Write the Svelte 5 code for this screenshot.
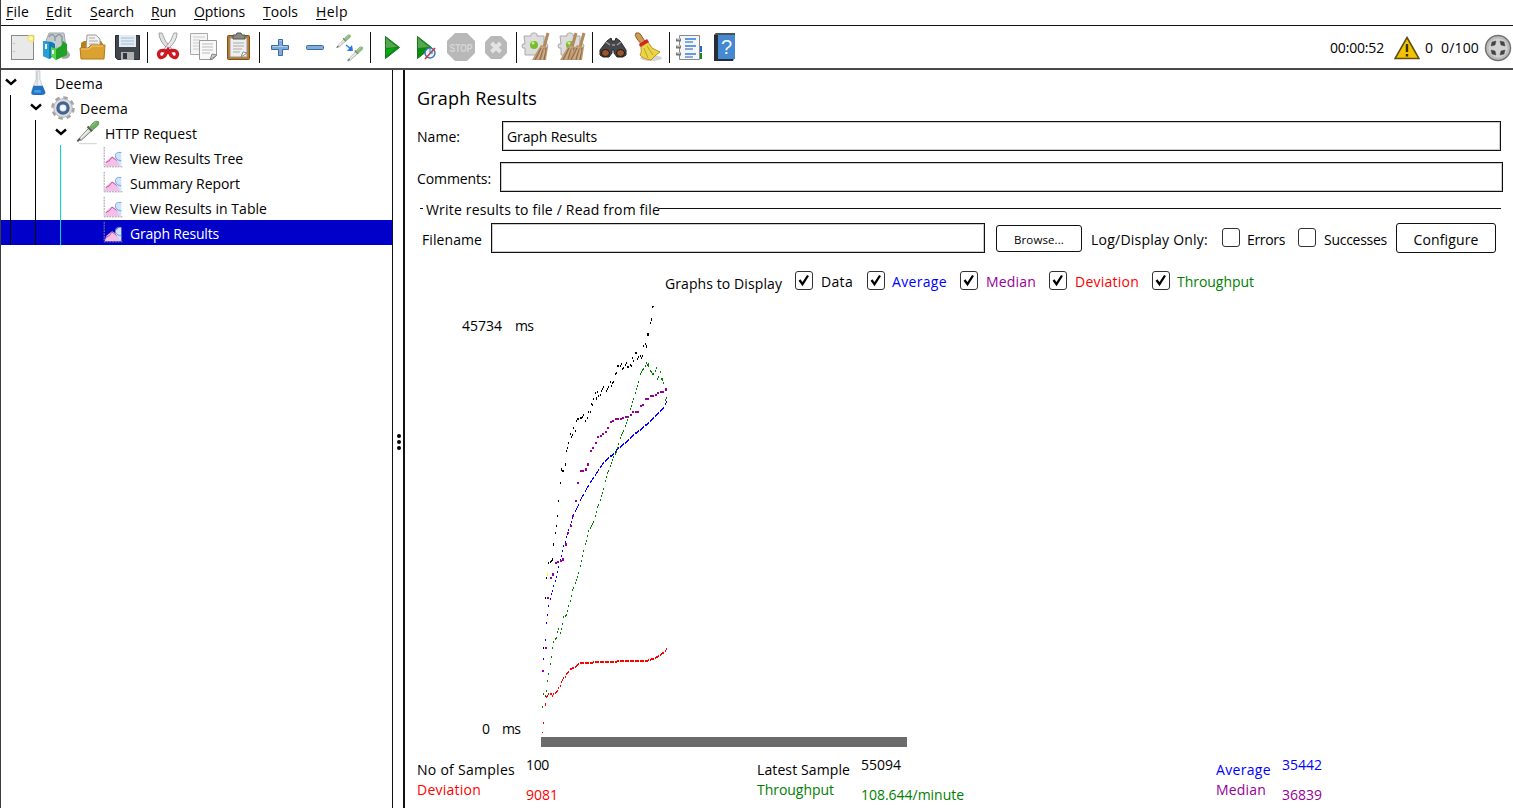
<script>
  // Tightens or loosens tracking so a label fills its designed width.
  function fit(node, width) {
    const natural = node.getBoundingClientRect().width;
    node.style.letterSpacing = (width - natural) / node.textContent.length + 'px';
  }

  const menus = [['File', 23], ['Edit', 26], ['Search', 44], ['Run', 25], ['Options', 51], ['Tools', 35], ['Help', 32]];
  const tools = ['new', 'templates', 'open', 'save', '|', 'cut', 'copy', 'paste', '|', 'plus', 'minus', 'toggle', '|', 'play', 'playnow', 'stop', 'shutdown', '|', 'clear', 'clearall', '|', 'search', 'sweep', '|', 'list', 'help'];
  const tree = [
    { d: 0, icon: 'flask', text: 'Deema', w: 48, open: true },
    { d: 1, icon: 'gear', text: 'Deema', w: 48, open: true },
    { d: 2, icon: 'pipette', text: 'HTTP Request', w: 92, open: true },
    { d: 3, icon: 'chart', text: 'View Results Tree', w: 113 },
    { d: 3, icon: 'chart', text: 'Summary Report', w: 110 },
    { d: 3, icon: 'chart', text: 'View Results in Table', w: 137 },
    { d: 3, icon: 'chart', text: 'Graph Results', w: 89, selected: true }
  ];
  const graphs = [['Data', 32, 'black'], ['Average', 55, 'blue'], ['Median', 50, 'purple'], ['Deviation', 64, 'red'], ['Throughput', 77, 'green']];
  const stats = [
    [['No of Samples', 98, '100', 23, 'black'], ['Latest Sample', 93, '55094', 40, 'black'], ['Average', 55, '35442', 40, 'blue']],
    [['Deviation', 64, '9081', 32, 'red'], ['Throughput', 77, '108.644/minute', 103, 'green'], ['Median', 50, '36839', 40, 'purple']]
  ];

  // Each mark is [x, y, width, height]; width and height are optional.
  const draw = (marks, dw = 1, dh = 2) => marks.map(([x, y, w = dw, h = dh]) => `M${x} ${y}h${w}v${h}h${-w}z`).join('');

  // Samples advance 1.25px, so every fifth column stays empty.
  function trace(points) {
    const out = [];
    for (let i = 0; i < points.length - 1; i++) {
      const [x0, y0] = points[i];
      const [x1, y1] = points[i + 1];
      for (let x = x0; x < x1; x++) {
        if (x % 5 === 4) continue;
        out.push([x, Math.round(y0 + ((y1 - y0) * (x - x0)) / (x1 - x0))]);
      }
    }
    out.push(points[points.length - 1]);
    return out;
  }

  const data = draw([
    [122,6,2,1],[122,6],[121,18,1,3],[120,22],[117,33,2,3],[115,43],[116,45,1,3],[113,45],[105,52,2,2],[102,57],[103,60],[107,58],[108,56],[110,55],[111,57],[112,55],
    [87,65,2,2],[90,65],[91,63],[92,68],[93,67],[95,64],[96,62],[97,66,2,2],[100,64],[101,65],[85,73],[86,72],[83,81],[82,82],[80,81],[81,85],[78,86],[77,88],[76,90],[73,86],[72,88],[71,90],[70,94],
    [67,91],[65,92],[68,95],[66,97,1,3],[63,98],[62,104],[61,103],[60,111],[58,111],[57,117],[55,120],[53,114],[52,116],[50,117,2,2],[47,118,2,2],[46,120],[45,130],[43,127],[42,134],[41,136],[40,133],
    [38,142],[37,147],[36,150],[35,163,1,3],[31,168,1,3],[32,170,2,2],[30,182],[28,200],[27,215],[26,225],[25,232],[23,243,1,3],[22,258,1,3],[21,260],[20,261],[18,262],[16,277],[15,297],[13,347]
  ]);
  const median = draw([
    [135,88,2,3],[132,91],[130,91],[127,92],[125,94],[122,95],[120,95,3],[115,98,4],[112,104],[110,105],[105,111,4],[102,111],[100,114],[95,116,3],[92,117],[90,118],[85,118,4],[82,120],[80,121],[77,127],[75,131],[72,133],[70,135],[67,136],[65,142],[62,147],
    [60,150],[57,163,2,3],[55,168,2,3],[50,170,4],[47,182],[45,200],[42,215],[40,225],[37,232],[35,243,2,3],[32,258,2,3],[30,260],[27,261],[25,262],[22,273,2,3],[20,277],[17,297],[15,347],[12,370]
  ], 2, 2);
  const average = draw(trace([
    [13,358],[15,339],[16,322],[17,314],[18,305],[20,298],[21,293],[22,290],[23,285],[25,280],[26,276],[27,271],[28,266],[31,255],[33,245],[35,241],[36,236],[38,229],[40,224],[43,214],[46,208],[50,199],[55,190],[60,181],[66,172],[73,162],[78,157],[84,152],[87,148],[92,144],[97,140],[103,134],[112,127],[120,120],[126,114],[130,110],[133,107],[136,101]
  ]), 1, 2);
  const deviation = draw([
    [12,432,1,1],[13,422],[15,403,1,3],[16,396],
    ...trace([[17,395],[18,393],[21,393],[22,395],[23,393],[25,392],[27,390],[28,387],[30,385],[31,381],[33,377],[35,376],[36,373],[38,371],[40,368],[42,367],[45,366],[46,365],[48,363],[51,362],[62,362],[63,361],[85,361],[87,360],[117,360],[118,359],[122,358],[125,357],[128,355],[131,353],[134,351],[136,348]])
  ]);
  const throughput = draw([
    ...trace([[12,406],[13,393],[15,395],[16,390],[17,380],[18,373],[20,363],[21,356],[22,347],[23,341],[25,338],[26,337],[27,331],[28,328],[30,332],[31,328],[32,323],[33,316],[35,315],[36,314],[37,310],[38,305],[40,300],[41,295],[42,289],[46,279],[50,265],[53,250],[56,240],[58,230],[61,225],[63,221],[65,215],[67,206],[70,199],[73,188],[77,172],[80,165],[83,156],[86,151],[88,143],[91,134],[93,130],[96,122],[98,116],[100,108],[102,101],[105,92],[108,81],[110,73],[112,69],[115,65]]),
    [116,62],[117,64],[118,63],[118,65],[120,70],[121,71],[122,73],[123,73],[126,67],[125,70],[127,78],[128,76],[130,71],[131,78],[132,78,1,3],[133,82],[136,97],[135,99]
  ]);
</script>

{#snippet label(text, width, cls = '')}
  <span class="label {cls}" use:fit={width}>{text}</span>
{/snippet}

{#snippet check(on)}
  <span class="check">
    {#if on}
      <svg viewBox="0 0 16 16"><path d="M3.500 8l3 4.200L12 3.500" fill="none" stroke="#000" stroke-width="2.300" /></svg>
    {/if}
  </span>
{/snippet}

{#snippet brush(x)}
  <g transform="translate({x} 0)">
    <path d="M25-1l-4 14" stroke="#b18a60" stroke-width="3" />
    <path d="M18 11l7 2-2 13H9l4-7z" fill="#bd9a73" />
    <path d="M18 14l-6 12M20 14l-3 12M23 14l-2 12" stroke="#8b6845" />
    <path d="M20 13l-5 12M22 16l-3 10" stroke="#dbbd97" stroke-width=".8" />
  </g>
{/snippet}

{#snippet pipette()}
  <path d="M2 21L13 9l3 3L5 22z" fill="#d9dcd6" stroke="#777" />
  <path d="M5 19l8-8" stroke="#fff" />
  <path d="M1 23l3-3" stroke="#555" stroke-width="2" />
  <path d="M12 7l5 5" stroke="#556052" stroke-width="2.400" />
  <path d="M14 8l4-5q3-3 6-1 1 3-2 5l-5 4z" fill="#6fae60" stroke="#5b9850" />
  <path d="M17 6l4-4" stroke="#b0d8a4" />
{/snippet}

{#snippet icon(name)}
  <svg class="icon" width="28" height="28" viewBox="0 0 28 28" fill="none">
    {#if name === 'new'}
      <rect x="3.500" y="1.500" width="22" height="24" fill="#e9e9e9" stroke="#888" />
      <path d="M6 9v1m0 7v1" stroke="#999" />
      <circle cx="23" cy="4.500" r="4" fill="#f7e66c" opacity=".75" /><circle cx="23" cy="4.500" r="2" fill="#fff8b8" />
    {:else if name === 'templates'}
      <path d="M22 12l6 8q1 5-8 5z" fill="#777" opacity=".65" />
      <path d="M4 7l3-8h15l2 14-16 2z" fill="#c5cccf" stroke="#a0a9ac" />
      <path d="M7 3q3-5 6 0v4m1-4q3-5 6 0v6" stroke="#8d999e" stroke-width="1.500" />
      <path d="M1 7l9 1 3 2v10l-5 5-7-3z" fill="#1479b8" />
      <path d="M1 7l6 2v16l-6-3z" fill="#2ba0d6" />
      <path d="M9 13l5 2 5-3 2-5 4 3v11l-11 5-5-4z" fill="#20a324" />
      <path d="M9 13l5 2v11l-5-4z" fill="#54d84c" /><path d="M4 10v5m7 1v4" stroke="#e9ffff" stroke-width="2" />
    {:else if name === 'open'}
      <path d="M3 9l3-2h17l2 3v15H3z" fill="#b97e15" />
      <path d="M9 1h9l4 4v10H8z" fill="#f3f3f3" stroke="#999" />
      <path d="M11 4h6m-6 3h9m-9 3h9" stroke="#aaa" />
      <path d="M2 14h8l3-3h14l-1 14H3z" fill="#dba131" stroke="#b37b17" /><path d="M3 15h8l3-3h11" stroke="#f3cf71" />
    {:else if name === 'save'}
      <path d="M2.500 1.500h24v24h-22l-2-2z" fill="#41454c" stroke="#272a2f" />
      <path d="M6 1h17v12H6z" fill="#e3edf6" /><path d="M8 4h13M8 7h13m-13 3h13" stroke="#a7bbcf" />
      <path d="M8 18h13v8H8z" fill="#aeb0b2" /><path d="M10 19h4v6h-4z" fill="#34383e" />
    {:else if name === 'cut'}
      <path d="M5-1q0 8 8 15l3 3 2-2Q10 7 8-1z" fill="#e0e0e0" stroke="#a0a3a4" />
      <path d="M23-1q0 8-8 15l-3 3-2-2Q18 7 20-1z" fill="#e8e8e8" stroke="#a0a3a4" />
      <path d="M12 17q-7-2-7.500 3 1 6 6 2l3.500-6 3.500 6q5 4 6-2-.5-5-7.500-3" stroke="#cc1822" stroke-width="3.500" />
    {:else if name === 'copy'}
      <path d="M.5-.5h17v21H.5z" fill="#f5f5f5" stroke="#aaa" /><path d="M3 3h12M3 6h7m-7 3h7m-7 3h7m-7 3h7" stroke="#ccc" />
      <path d="M9.500 6.500h17v15l-4 4h-13z" fill="#f8f8f8" stroke="#999" /><path d="M12 10h11m-11 3h11m-11 3h11m-11 3h8" stroke="#bbb" /><path d="M20 26l2-6 5 1z" fill="#ccc" stroke="#888" />
    {:else if name === 'paste'}
      <rect x="3.500" y="1.500" width="22" height="24" rx="1" fill="#b87826" stroke="#80511a" />
      <path d="M6 4h17v19H6z" fill="#eee" stroke="#999" /><path d="M9 9h11M9 12h11m-11 3h9m-9 3h7" stroke="#aaa" />
      <path d="M9 5V1h3l1-2h4l1 2h3v4z" fill="#888a85" stroke="#555753" /><path d="M17 23l2-5 4 1z" fill="#fff" stroke="#888" />
    {:else if name === 'plus'}
      <path d="M12.500 5.500h4v6h6v4h-6v6h-4v-6h-7v-4h7z" fill="#7fa9d8" stroke="#386baa" /><path d="M13 6.500h3M6.500 12.500h15" stroke="#abc9e8" />
    {:else if name === 'minus'}
      <rect x="5.500" y="11.500" width="17" height="4" rx="1" fill="#83add9" stroke="#386baa" />
    {:else if name === 'toggle'}
      <g opacity=".8">
        <g transform="translate(1 0) scale(.6)">{@render pipette()}</g>
        <g transform="translate(12 12) scale(.65)">{@render pipette()}</g>
      </g>
      <path d="M11 11l5 4" stroke="#2874e8" stroke-width="1.500" /><path d="M18 17h-6l5-6z" fill="#2874e8" />
    {:else if name === 'play'}
      <path d="M7.500 2.500l14 11-14 11z" fill="#098b0f" stroke="#1c7a1d" /><path d="M8 4l11 9-11 1z" fill="#55a64e" /><path d="M8 15l10-1-10 8z" fill="#0aa515" />
    {:else if name === 'playnow'}
      <path d="M5.500 2.500l14 11-14 11z" fill="#098b0f" stroke="#1c7a1d" /><path d="M6 4l11 9-11 1z" fill="#55a64e" />
      <circle cx="18" cy="19" r="5" fill="#e8eff6" stroke="#3e79b2" stroke-width="1.500" /><path d="M13 25L23 14" stroke="#d0303a" stroke-width="1.500" /><path d="M18 15v4h3" stroke="#3e79b2" />
    {:else if name === 'stop'}
      <path d="M9-1h12l8 8v12l-8 8H9l-8-8V7z" fill="#b8b8b8" />
      <text x="15" y="17.500" text-anchor="middle" font-family="Liberation Sans" font-weight="700" font-size="11" textLength="23" lengthAdjust="spacingAndGlyphs" fill="#d6d6d6">STOP</text>
    {:else if name === 'shutdown'}
      <path d="M9 2h10l6 6v11l-6 6H9l-6-6V8z" fill="#b8b8b8" /><path d="M9.500 9l9 9m0-9l-9 9" stroke="#e3e3e3" stroke-width="4" />
    {:else if name === 'clear' || name === 'clearall'}
      <path d="M2 2h7q-1-3 3-3t3 3h7v7q4 0 4 3t-4 3v6H3v-7q-3 1-3-2t3-2z" fill="#ddd" stroke="#aaa" />
      <circle cx="12" cy="11" r="4" fill="#77bd2d" /><circle cx="11" cy="9" r="1.500" fill="#c7ed8e" />
      {#if name === 'clearall'}{@render brush(-7)}{/if}
      {@render brush(1)}
    {:else if name === 'search'}
      <path d="M8 7l4-3 1 3h3l1-3 4 3 6 9v5l-3 2h-6l-3-4v-3h-2v3l-3 4H4l-3-2v-5z" fill="#46474a" stroke="#252525" />
      <path d="M7 8l4 3M22 8l-4 3M13 11h3" stroke="#999" stroke-width="1.500" />
      <ellipse cx="6.500" cy="19" rx="4" ry="3.500" fill="#9d5429" stroke="#171717" /><ellipse cx="21.500" cy="19" rx="4" ry="3.500" fill="#9d5429" stroke="#171717" />
    {:else if name === 'sweep'}
      <ellipse cx="17" cy="24" rx="11" ry="3" fill="#aaa" opacity=".5" />
      <path d="M2-1q4-1 5 2l5 8-4 2-5-6Q0 1 2-1z" fill="#d19a51" stroke="#94602c" />
      <path d="M7 13l7-5 4 6 8 4-4 3-5 5q-8-1-11-5 2-2 1-8z" fill="#ead447" stroke="#b9961c" />
      <path d="M6 13l9-5-2-3-8 5z" fill="#d12525" /><path d="M10 14l4 10m-1-12l6 9" stroke="#bda325" />
    {:else if name === 'list'}
      <path d="M23 12h4v6h-4z" fill="#246bd0" /><path d="M23 19h4v6h-4z" fill="#168927" /><path d="M4.500 1.500h20v24h-20z" fill="#f5f5f5" stroke="#888" />
      <path d="M1 6h5M1 13h5m-5 7h5" stroke="#777" stroke-width="3" /><path d="M2 5h3m-3 7h3m-3 7h3" stroke="#eee" />
      <path d="M10 5h11m-11 7h11m-11 8h11" stroke="#2c7ce8" stroke-width="1.500" /><path d="M10 8h8m-8 7h8m-8 8h8" stroke="#2456b8" />
    {:else if name === 'help'}
      <path d="M3 1l2-2h19v23l-2 5H3z" fill="#252e38" /><path d="M7 1h17v24H7z" fill="#4589d2" /><path d="M4 0h20" stroke="#777" />
      <text x="15.500" y="20" text-anchor="middle" font-family="Liberation Sans" font-size="20" fill="#f2f7fc">?</text>
    {:else if name === 'flask'}
      <path d="M12 1h4v9l5 13q1 3-3 3h-8q-4 0-3-3l5-13z" fill="#edf0f2" stroke="#c3cace" />
      <path d="M9 17h10l3 7q0 3-4 3h-8q-4 0-3-3z" fill="#2671bf" /><path d="M10 23h7" stroke="#3fa0ee" stroke-width="3" /><path d="M13 2v14" stroke="#b8c2c7" />
    {:else if name === 'gear'}
      <g transform="translate(1 0)">
        <circle cx="13" cy="14" r="10.700" stroke="#a5a5a5" stroke-width="4" stroke-dasharray="4.600 3.803" />
        <circle cx="13" cy="14" r="10" fill="#dedede" stroke="#b0b0b0" /><circle cx="13" cy="14" r="5.500" fill="#dfeaf6" stroke="#426494" stroke-width="3.500" /><circle cx="13" cy="14" r="2.500" fill="#f7faff" />
      </g>
    {:else if name === 'pipette'}
      <g transform="translate(1.500 0)">{@render pipette()}<path d="M3 25.500h19" stroke="#ccc" /></g>
    {:else if name === 'chart'}
      <g transform="translate(1 1)">
        <path d="M6 16l6-5 5 3 4 8H4z" fill="#f4bfe9" /><path d="M5 18l4-2 3-4 4 3 5 5" stroke="#c7458e" />
        <path d="M22 7v15l-2-1-3-5q-3-5 1-8z" fill="#cfe3fb" /><path d="M22 7q-8-1-6 6 2 3 6 3" stroke="#6f9fd7" />
        <path d="M3.500 1v21.500h20" stroke="#97939c" stroke-dasharray="2 1" />
      </g>
    {/if}
  </svg>
{/snippet}

<div class="app">
  <nav class="menu">
    {#each menus as [text, width]}
      <span class="label" use:fit={width}><u>{text[0]}</u>{text.slice(1)}</span>
    {/each}
  </nav>

  <header class="toolbar">
    <div class="tools">
      {#each tools as name}
        {#if name === '|'}<i class="sep"></i>{:else}{@render icon(name)}{/if}
      {/each}
    </div>
    <div class="status">
      {@render label('00:00:52', 54)}
      <svg width="26" height="24" viewBox="0 0 26 24"><path d="M13 1.500L25 22.500H1z" fill="#f3c300" stroke="#5c5014" stroke-width="1.600" /><path d="M13 8v8m0 2v2.500" stroke="#37320c" stroke-width="2.400" /></svg>
      {@render label('0', 8)}
      {@render label('0/100', 38)}
      <svg width="28" height="28" viewBox="0 0 28 28"><circle cx="14" cy="14" r="12.500" fill="#bbb" stroke="#737373" stroke-width="1.500" /><circle cx="14" cy="14" r="9.500" fill="#d2d2d2" /><path d="M7 12l1-4 4-1-1 4zM21 12l-1-4-4-1 1 4zM7 16l1 4 4 1-1-4zM21 16l-1 4-4 1 1-4z" fill="#444" stroke="#444" stroke-width=".5" /></svg>
    </div>
  </header>

  <div class="body">
    <aside>
      {#each tree as row}
        <div class="row" class:selected={row.selected}>
          {#each Array(row.d) as _, i}<i class="guide" class:cyan={i === 2}></i>{/each}
          <span class="chevron">
            {#if row.open}<svg width="12" height="10" viewBox="0 0 12 10"><path d="M1 2.500l5 4.500 5-4.500" fill="none" stroke="#000" stroke-width="2.400" /></svg>{/if}
          </span>
          {@render icon(row.icon)}
          {@render label(row.text, row.w)}
        </div>
      {/each}
    </aside>
    <div class="splitter"><i></i><i></i><i></i></div>

    <main>
      <h1>{@render label('Graph Results', 120)}</h1>
      <div class="field name">{@render label('Name:', 43)}<div class="input">{@render label('Graph Results', 90)}</div></div>
      <div class="field comments">{@render label('Comments:', 74)}<div class="input"></div></div>
      <div class="legend"><i class="dash"></i>{@render label('Write results to file / Read from file', 234)}<i class="rule"></i></div>
      <div class="file">
        {@render label('Filename', 60)}
        <div class="input"></div>
        <div class="button browse">{@render label('Browse...', 50)}</div>
        {@render label('Log/Display Only:', 117)}
        {@render check(false)}{@render label('Errors', 38)}
        {@render check(false)}{@render label('Successes', 63)}
        <div class="button configure">{@render label('Configure', 65)}</div>
      </div>
      <div class="graphs">
        {@render label('Graphs to Display', 117, 'caption')}
        {#each graphs as [text, width, color]}{@render check(true)}{@render label(text, width, color)}{/each}
      </div>
      <div class="plot">
        <div class="axis">
          <div class="tick">{@render label('45734', 40)}{@render label('ms', 18)}</div>
          <div class="tick low">{@render label('0', 8)}{@render label('ms', 18)}</div>
        </div>
        <div class="canvas">
          <svg width="150" height="437" viewBox="11 0 150 437" shape-rendering="crispEdges">
            <path d={data} fill="#000" />
            <path d={average} fill="#00f" />
            <path d={median} fill="#960096" />
            <path d={deviation} fill="#f00" />
            <path d={throughput} fill="#008000" />
            <path d="M17 273h1v3h-1z" fill="#ff0" />
          </svg>
          <div class="bar"></div>
        </div>
      </div>
      <div class="stats">
        {#each stats as group, i}
          <div class="stat" class:second={i === 1}>
            {#each group as [name, nw, value, vw, color]}
              {@render label(name, nw, color)}{@render label(value, vw, color + ' value')}
            {/each}
          </div>
        {/each}
      </div>
    </main>
  </div>
</div>

<style>
  :global(body) { margin: 0; background: #fff; overflow: hidden; }
  * { box-sizing: border-box; }
  .app { width: 1513px; height: 808px; overflow: hidden; border-left: 1px solid #3c3c3c; display: flex; flex-direction: column; font: 14px/20px "Open Sans", "Noto Sans", sans-serif; color: #000; }
  .label { display: inline-block; justify-self: start; white-space: nowrap; }
  .menu { height: 26px; flex: none; border-bottom: 1px solid #111; display: grid; grid-template-columns: 40px 44px 61px 43px 69px 53px 40px; padding: 2px 0 0 5px; }
  .menu u { text-underline-offset: 2px; text-decoration-thickness: 1px; }
  .toolbar { height: 44px; flex: none; border-bottom: 2px solid #4a4a4a; display: flex; justify-content: space-between; }
  .tools { display: grid; align-items: center; padding-left: 7px; padding-top: 1px; grid-template-columns: 34px 36px 35px 34px 7px 36px 34px 35px 7px 35px 34px 35px 8px 34px 34px 36px 34px 6px 36px 34px 7px 35px 35px 6px 36px 28px; }
  .icon { display: block; flex: none; overflow: visible; }
  .sep { width: 1px; height: 31px; background: #111; }
  .status { display: grid; grid-template-columns: 64px 31px 16px 43px 28px; align-items: center; padding: 1px 1px 0 0; }
  .body { flex: 1; display: flex; min-height: 0; }
  aside { width: 391px; }
  .row { height: 25px; display: flex; align-items: center; }
  .row .icon { width: 26px; height: 26px; margin-right: 4px; }
  .guide { width: 25px; height: 25px; flex: none; border-left: 1px solid #000; margin-left: 9px; margin-right: -9px; }
  .guide.cyan { border-color: #00d8dc; }
  .chevron { width: 24px; height: 25px; flex: none; padding: 7px 0 0 4px; line-height: 0; }
  .row .label { padding-top: 2px; }
  .selected { background: #0000c8; color: #fff; }
  .splitter { width: 13px; border-left: 1px solid #111; border-right: 2px solid #111; display: flex; flex-direction: column; align-items: center; justify-content: center; gap: 2px; padding-top: 5px; padding-left: 1px; }
  .splitter i { width: 4px; height: 4px; border-radius: 50%; background: #000; }
  main { flex: 1; display: flex; flex-direction: column; min-width: 0; }
  h1 { margin: 0; height: 51px; padding: 16px 0 0 12px; font: 18px/24px "Open Sans", "Noto Sans", sans-serif; }
  .field { height: 30px; display: grid; align-items: center; padding-left: 12px; }
  .name { grid-template-columns: 85px 999px; margin-bottom: 11px; }
  .name > .label { padding-top: 2px; }
  .comments { grid-template-columns: 83px 1003px; }
  .input { height: 30px; border: 1px solid #111; box-shadow: inset 0 0 0 1px #ccc; padding: 5px 4px; }
  .comments > .label { padding-top: 3px; }
  .legend { height: 31px; display: flex; align-items: flex-start; padding: 8px 12px 0 15px; }
  .dash { width: 3px; height: 1px; background: #111; margin: 8px 3px 0 0; }
  .rule { flex: 1; height: 1px; background: #111; margin: 8px 0 0 -1px; }
  .file { height: 30px; display: grid; align-items: center; padding-left: 17px; grid-template-columns: 69px 505px 95px 131px 25px 51px 26px 72px 100px; }
  .file > .input { width: 494px; }
  .file > .label { padding-top: 3px; }
  .button { border: 1.500px solid #111; border-radius: 3px; display: flex; align-items: center; justify-content: center; }
  .browse { width: 86px; height: 27px; font-size: 11.500px; padding-top: 3px; }
  .configure { width: 100px; height: 30px; padding-top: 3px; }
  .check { width: 18px; height: 19px; border: 1.500px solid #333; border-radius: 3px; margin-top: -2px; display: block; }
  .check svg { display: block; width: 16px; height: 16px; }
  .graphs { height: 52px; display: grid; align-items: start; padding: 19px 0 0 260px; grid-template-columns: 130px 26px 46px 25px 68px 26px 63px 26px 77px 25px 80px; }
  .graphs .check { margin-top: -1px; }
  .graphs .caption { padding-top: 2px; }
  .plot { height: 442px; display: flex; }
  .axis { width: 136px; display: flex; flex-direction: column; justify-content: space-between; padding: 11px 0 8px; }
  .tick { display: flex; gap: 13px; padding-left: 57px; }
  .tick.low { padding-left: 77px; gap: 12px; }
  .canvas { width: 366px; }
  .canvas svg { display: block; height: 437px; margin-top: -5px; }
  .bar { height: 10px; background: #6b6b6b; }
  .stat { display: grid; grid-template-columns: 109px 231px 104px 355px 66px 60px; padding-left: 12px; height: 25px; align-items: start; padding-top: 13px; }
  .stat .value { margin-top: -5px; }
  .stat.second { padding-top: 8px; }
  .stat.second .value { margin-top: 5px; }
  .blue { color: #00f; }
  .purple { color: #960096; }
  .red { color: #f00; }
  .green { color: #008000; }
</style>
